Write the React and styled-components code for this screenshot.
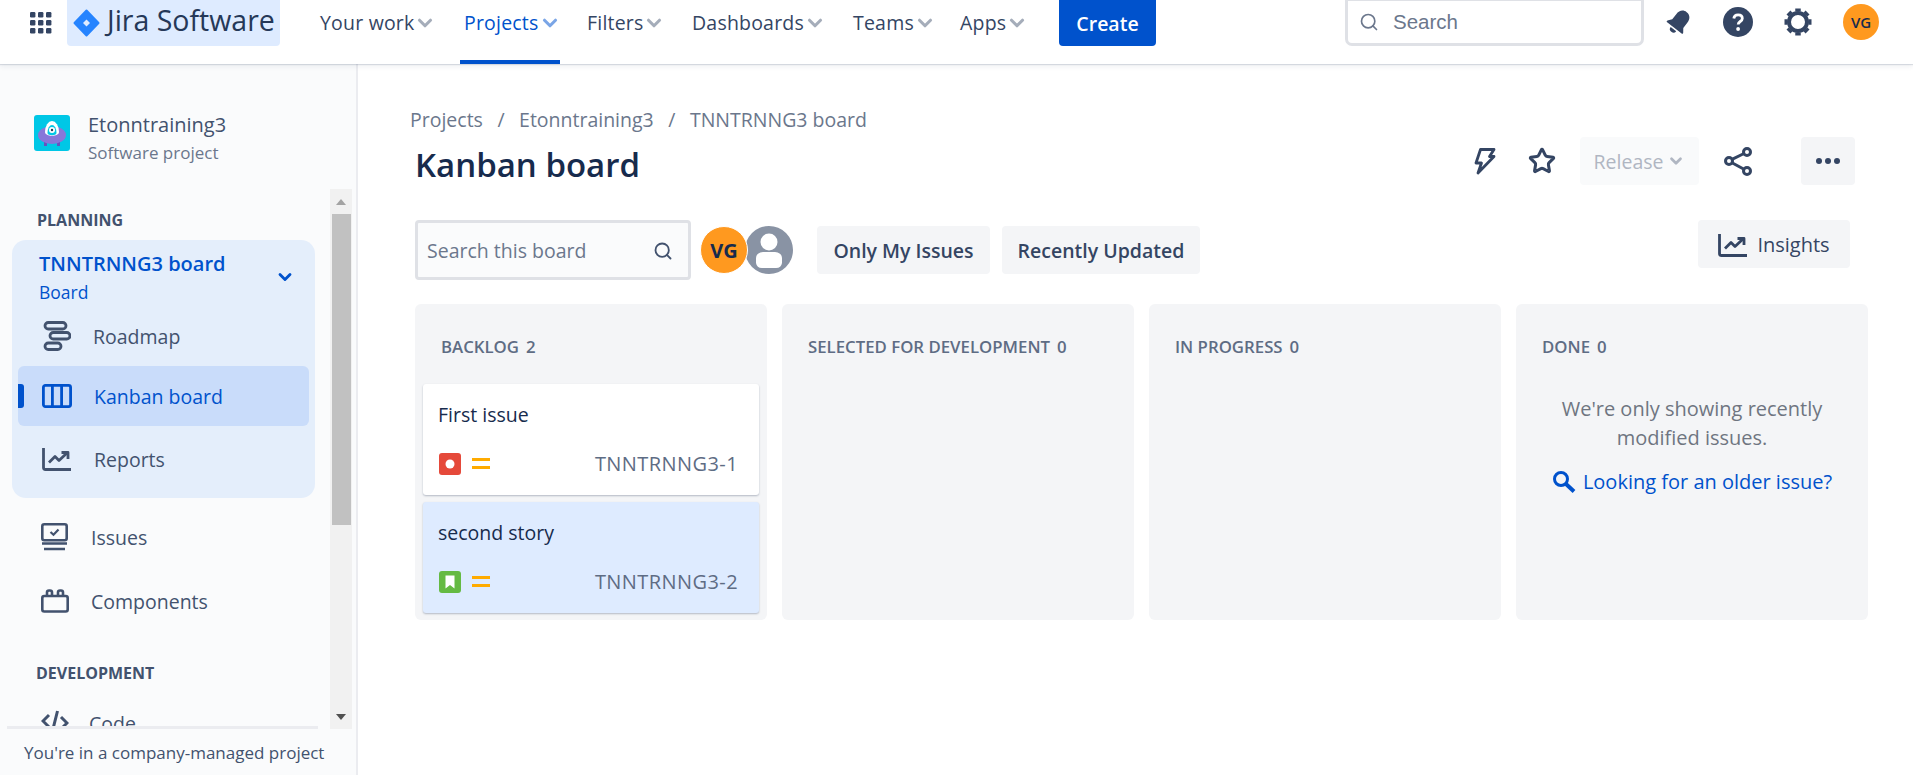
import React from "react";
import styled, { createGlobalStyle } from "styled-components";
import { ChevronDown, Search as SearchIcon, Star } from "lucide-react";

const GlobalStyle = createGlobalStyle`
  html, body {
    margin: 0;
    padding: 0;
    height: 100%;
    overflow: hidden;
    background: #fff;
    font-family: "Open Sans", "Noto Sans", "Liberation Sans", sans-serif;
    color: #172b4d;
  }
  * { box-sizing: border-box; }
`;

const Page = styled.div`
  width: 1913px;
  height: 775px;
  display: flex;
  flex-direction: column;
  overflow: hidden;
`;

/* top bar */
const TopBar = styled.header`
  height: 64px;
  flex: none;
  display: flex;
  align-items: flex-start;
  background: #fff;
  box-shadow: 0 1px 1px rgba(9, 30, 66, 0.13), 0 3px 5px rgba(9, 30, 66, 0.06);
  position: relative;
  z-index: 2;
`;

const GridButton = styled.div`
  margin: 10px 15px 0 28px;
  width: 24px;
  height: 24px;
  color: #344563;
`;

const LogoBox = styled.div`
  width: 213px;
  height: 46px;
  display: flex;
  align-items: center;
  gap: 7px;
  padding-left: 6px;
  background: #deebff;
  border-radius: 0 0 4px 4px;
`;

const LogoText = styled.span`
  font-size: 28.5px;
  line-height: 36px;
  margin-top: -6px;
  color: #253858;
  white-space: nowrap;
`;

const NavList = styled.nav`
  display: flex;
  margin-left: 36px;
  height: 64px;
`;

const NavItem = styled.div`
  width: ${(p) => p.$w}px;
  margin-right: ${(p) => p.$after || 0}px;
  height: 64px;
  display: flex;
  align-items: flex-start;
  padding: 10px 0 0 4px;
  font-size: 19.5px;
  letter-spacing: 0.2px;
  line-height: 26px;
  white-space: nowrap;
  color: ${(p) => (p.$active ? "#0052cc" : "#344563")};
  border-bottom: 4px solid ${(p) => (p.$active ? "#0052cc" : "transparent")};
  svg {
    flex: none;
    margin: 2px 0 0 0;
    color: ${(p) => (p.$active ? "#7aa5e6" : "#a5adba")};
  }
`;

const CreateButton = styled.button`
  width: 97px;
  height: 46px;
  margin-left: 2px;
  border: none;
  border-radius: 0 0 4px 4px;
  background: #0052cc;
  color: #fff;
  font: 600 19.5px "Open Sans", sans-serif;
`;

const TopRight = styled.div`
  margin-left: auto;
  display: flex;
  align-items: flex-start;
  padding-right: 34px;
`;

const TopSearch = styled.div`
  width: 299px;
  height: 46px;
  display: flex;
  align-items: center;
  gap: 14px;
  padding-left: 11px;
  border: 3px solid #dfe1e6;
  border-top-width: 1px;
  border-radius: 0 0 7px 7px;
  font: 20.5px "Liberation Sans", sans-serif;
  color: #6b778c;
  margin-right: 21px;
`;

const TopIcon = styled.div`
  width: ${(p) => p.$w}px;
  height: 30px;
  margin: 7px ${(p) => p.$gap}px 0 0;
  color: #344563;
  svg { display: block; }
`;

const SmallAvatar = styled.div`
  width: 36px;
  height: 36px;
  margin-top: 4px;
  border-radius: 50%;
  background: #ff991f;
  display: flex;
  align-items: center;
  justify-content: center;
  font-size: 15px;
  font-weight: 600;
  color: #172b4d;
`;

/* below the bar */
const Body = styled.div`
  flex: 1;
  min-height: 0;
  display: flex;
`;

const Sidebar = styled.aside`
  width: 358px;
  flex: none;
  display: flex;
  flex-direction: column;
  background: #fafbfc;
  border-right: 2px solid #ebecf0;
`;

const ProjectHead = styled.div`
  height: 125px;
  flex: none;
  display: flex;
  align-items: center;
  gap: 18px;
  padding: 12px 0 0 34px;
`;

const ProjectText = styled.div`
  display: flex;
  flex-direction: column;
  gap: 6px;
  margin-top: 11px;
`;

const ProjectName = styled.div`
  font-size: 20px;
  font-weight: 500;
  line-height: 24px;
  color: #42526e;
`;

const ProjectType = styled.div`
  font-size: 17px;
  line-height: 20px;
  color: #6b778c;
`;

const ScrollArea = styled.div`
  flex: 1;
  min-height: 0;
  display: flex;
`;

const SideContent = styled.div`
  flex: 1;
  min-width: 0;
  overflow: hidden;
`;

const SectionLabel = styled.div`
  font-size: 16px;
  font-weight: 700;
  line-height: 20px;
  color: #42526e;
  padding-left: ${(p) => p.$left}px;
  margin-top: ${(p) => p.$top}px;
`;

const BoardGroup = styled.div`
  width: 303px;
  height: 258px;
  margin: 10px 0 0 12px;
  padding: 4px 6px 0;
  background: #e4eefb;
  border-radius: 14px;
`;

const BoardHead = styled.div`
  height: 64px;
  display: flex;
  align-items: center;
  justify-content: space-between;
  padding: 0 14px 0 21px;
  color: #0052cc;
  svg { margin-top: 2px; }
`;

const BoardTitle = styled.div`
  font-size: 20px;
  font-weight: 600;
  line-height: 28px;
`;

const BoardSub = styled.div`
  font-size: 17.5px;
  line-height: 22px;
  margin-top: 3px;
`;

const SideRow = styled.div`
  position: relative;
  height: ${(p) => p.$h}px;
  display: flex;
  align-items: center;
  gap: ${(p) => p.$gap || 22}px;
  padding-left: ${(p) => p.$pad}px;
  margin-top: ${(p) => p.$top || 0}px;
  border-radius: 6px;
  font-size: 19.5px;
  color: ${(p) => (p.$active ? "#0052cc" : "#42526e")};
  background: ${(p) => (p.$active ? "#c9dcfa" : "transparent")};
  svg { flex: none; }
`;

const ActiveMark = styled.span`
  position: absolute;
  left: 0;
  top: 18px;
  width: 6px;
  height: 24px;
  background: #0052cc;
  border-radius: 0 3px 3px 0;
`;

const ScrollBar = styled.div`
  width: 22px;
  margin-right: 4px;
  flex: none;
  display: flex;
  flex-direction: column;
  background: #f1f1f1;
`;

const ScrollButton = styled.div`
  height: 25px;
  flex: none;
  display: flex;
  align-items: center;
  justify-content: center;
  &::before {
    content: "";
    border-left: 5px solid transparent;
    border-right: 5px solid transparent;
    ${(p) => (p.$up ? "border-bottom: 6px solid #a3a3a3;" : "border-top: 6px solid #505050;")}
  }
`;

const ScrollThumb = styled.div`
  height: 311px;
  background: #c1c1c1;
  margin: 0 1px 0 2px;
`;

const ScrollRest = styled.div`
  flex: 1;
`;

const SideFoot = styled.div`
  position: relative;
  height: 49px;
  flex: none;
  margin: -3px 0 0 7px;
  padding: 1px 0 0 17px;
  width: 311px;
  border-top: 3px solid #ebecf0;
  background: #fafbfc;
  display: flex;
  align-items: center;
  font-size: 17px;
  white-space: nowrap;
  color: #42526e;
`;

/* main */
const Main = styled.main`
  flex: 1;
  min-width: 0;
  padding: 41px 45px 0 57px;
`;

const Crumbs = styled.div`
  display: flex;
  gap: 14.5px;
  height: 28px;
  align-items: center;
  font-size: 19.5px;
  color: #6b778c;
  margin-left: -5px;
`;

const TitleRow = styled.div`
  display: flex;
  align-items: flex-start;
  justify-content: space-between;
  height: 84px;
  margin-top: 3px;
`;

const PageTitle = styled.h1`
  margin: 7px 0 0;
  font-size: 33px;
  font-weight: 600;
  line-height: 44px;
  color: #172b4d;
`;

const Actions = styled.div`
  display: flex;
  align-items: center;
  height: 48px;
  margin: 1px 13px 0 0;
  color: #344563;
`;

const ActionIcon = styled.div`
  display: flex;
  align-items: center;
  margin-left: ${(p) => p.$left}px;
`;

const GhostButton = styled.div`
  width: ${(p) => p.$w}px;
  height: 48px;
  margin-left: ${(p) => p.$left}px;
  display: flex;
  align-items: center;
  justify-content: center;
  gap: 4px;
  border-radius: 4px;
  background: ${(p) => (p.$muted ? "#f9fafb" : "#f4f5f7")};
  color: ${(p) => (p.$muted ? "#b0b6c2" : "#344563")};
  font-size: 19.5px;
`;

const FilterRow = styled.div`
  display: flex;
  align-items: center;
  height: 60px;
`;

const BoardSearch = styled.div`
  width: 276px;
  height: 60px;
  display: flex;
  align-items: center;
  justify-content: space-between;
  padding: 1px 15px 0 9px;
  border: 3px solid #dfe1e6;
  border-radius: 4px;
  background: #fafbfc;
  font-size: 19.5px;
  color: #6b778c;
  svg { color: #42526e; }
`;

const FilterAvatar = styled.div`
  width: 48px;
  height: 48px;
  margin-left: 9px;
  position: relative;
  z-index: 1;
  border-radius: 50%;
  border: 1px solid #fff;
  background: #ff991f;
  display: flex;
  align-items: center;
  justify-content: center;
  font-size: 20px;
  font-weight: 700;
  color: #172b4d;
`;

const GreyAvatar = styled.div`
  width: 48px;
  height: 48px;
  margin-left: -3px;
  svg { display: block; }
`;

const FilterButton = styled.div`
  height: 48px;
  width: ${(p) => p.$w}px;
  margin-left: ${(p) => p.$left}px;
  padding-top: 1px;
  display: flex;
  align-items: center;
  justify-content: center;
  background: #f4f5f7;
  border-radius: 4px;
  font-size: 19.5px;
  font-weight: 600;
  white-space: nowrap;
  color: #344563;
`;

const InsightsButton = styled(FilterButton)`
  align-self: flex-start;
  margin-left: auto;
  margin-right: 18px;
  font-size: 20px;
  font-weight: 500;
  gap: 9px;
`;

const Columns = styled.div`
  display: flex;
  gap: 15px;
  margin-top: 24px;
`;

const Column = styled.section`
  width: 352px;
  height: 316px;
  padding: 0 8px;
  background: #f4f5f7;
  border-radius: 6px;
`;

const ColumnHead = styled.div`
  height: 80px;
  display: flex;
  align-items: center;
  gap: 7px;
  padding: 4px 0 0 18px;
  font-size: 16.8px;
  font-weight: 600;
  white-space: nowrap;
  color: #5e6c84;
`;

const Card = styled.article`
  height: 111px;
  margin-bottom: 7px;
  padding: 17px 15px 0;
  border-radius: 3px;
  background: ${(p) => (p.$selected ? "#deebff" : "#fff")};
  box-shadow: 0 1px 2px rgba(9, 30, 66, 0.28);
`;

const CardTitle = styled.div`
  font-size: 19.5px;
  line-height: 28px;
  color: #172b4d;
`;

const CardFoot = styled.div`
  display: flex;
  align-items: center;
  margin-top: 21px;
  padding-left: 1px;
  gap: 11px;
`;

const CardKey = styled.span`
  margin-left: auto;
  padding-right: 6px;
  font-size: 20px;
  letter-spacing: 0.42px;
  color: #5e6c84;
`;

const Priority = styled.span`
  width: 18px;
  height: 11px;
  border-top: 3px solid #ffab00;
  border-bottom: 3px solid #ffab00;
`;

const DoneNote = styled.div`
  text-align: center;
  font-size: 20px;
  line-height: 29px;
  color: #6f7581;
  margin-top: 10px;
`;

const OlderLink = styled.div`
  display: flex;
  justify-content: center;
  align-items: center;
  gap: 7px;
  margin-top: 16px;
  font-size: 20px;
  white-space: nowrap;
  color: #0052cc;
`;

/* drawings */
function GridIcon() {
  const spots = [2, 10, 18];
  return (
    <svg width="24" height="24" viewBox="0 0 24 24" fill="currentColor">
      {spots.map((y) =>
        spots.map((x) => <rect key={x + "-" + y} x={x} y={y} width="5.4" height="5.4" rx="1.2" />)
      )}
    </svg>
  );
}

function JiraMark() {
  return (
    <svg width="27" height="28" viewBox="0 0 27 28">
      <path d="M13.5 1.5 25.5 14 13.5 26.5 1.5 14Z" fill="#2684ff" stroke="#2684ff" strokeWidth="2" strokeLinejoin="round" />
      <path d="M13.5 10.5 17 14 13.5 17.5 10 14Z" fill="#deebff" />
    </svg>
  );
}

function ProjectAvatar() {
  return (
    <svg width="36" height="36" viewBox="0 0 36 36">
      <rect width="36" height="36" rx="3" fill="#00c7e6" />
      <rect x="10" y="25" width="3" height="6" fill="#6554c0" />
      <rect x="23" y="25" width="3" height="6" fill="#6554c0" />
      <ellipse cx="18" cy="20" rx="14" ry="9" fill="#8777d9" />
      <path d="M11 17a7 11 0 0 1 14 0c0 5-14 5-14 0Z" fill="#fff" />
      <path d="M13.5 18a4.5 8 0 0 1 9 0c0 3-9 3-9 0Z" fill="#00c7e6" />
      <circle cx="18" cy="15" r="3" fill="#fff" />
      <circle cx="18" cy="15" r="1.2" fill="#253858" />
    </svg>
  );
}

function BellIcon() {
  return (
    <svg width="28" height="30" viewBox="0 0 28 30" fill="currentColor">
      <g transform="rotate(38 14 15)">
        <path d="M14 2.5c-4.6 0-7 3.4-7 8v6.500L4 21v1.500h20V21l-3-4v-6.500c0-4.600-2.400-8-7-8Z" />
        <path d="M10.500 24h7a3.500 3.500 0 0 1-7 0Z" />
      </g>
    </svg>
  );
}

function HelpIcon() {
  return (
    <svg width="30" height="30" viewBox="0 0 30 30">
      <circle cx="15" cy="15" r="15" fill="currentColor" />
      <path d="M10.800 11.500c.3-2.400 2-3.600 4.300-3.600 2.500 0 4.200 1.400 4.200 3.500 0 3.200-4.100 3-4.100 6" fill="none" stroke="#fff" strokeWidth="2.800" />
      <circle cx="15.100" cy="22" r="1.900" fill="#fff" />
    </svg>
  );
}

function GearIcon() {
  const angles = [0, 45, 90, 135, 180, 225, 270, 315];
  return (
    <svg width="28" height="30" viewBox="0 0 28 30" fill="none" stroke="currentColor">
      <circle cx="14" cy="15" r="9" strokeWidth="4" />
      {angles.map((a) => (
        <path key={a} d="M14 4.500V1.500" strokeWidth="5.500" transform={`rotate(${a} 14 15)`} />
      ))}
    </svg>
  );
}

function BoltIcon() {
  return (
    <svg width="22" height="28" viewBox="0 0 22 28" fill="none" stroke="currentColor" strokeWidth="2.800" strokeLinejoin="round">
      <path d="M6.500 2.500H20L15.500 9.500H20L4 26 7.500 16H2Z" />
    </svg>
  );
}

function ShareIcon() {
  return (
    <svg width="28" height="30" viewBox="0 0 28 30" fill="none" stroke="currentColor" strokeWidth="3">
      <circle cx="23" cy="6" r="3.500" />
      <circle cx="5" cy="15" r="3.500" />
      <circle cx="23" cy="25" r="3.500" />
      <path d="M8 13.300 20 7.500M8 16.700 20 23.300" />
    </svg>
  );
}

function TrendIcon() {
  return (
    <svg width="30" height="24" viewBox="0 0 30 24" fill="none" stroke="currentColor" strokeWidth="2.800" strokeLinejoin="round">
      <path d="M1.500 1v19.500a2 2 0 0 0 2 2H29" />
      <path d="M7 15.500 13 9.500 17 13.500 25 6" />
      <path d="M19.500 5.500H26V12" />
    </svg>
  );
}

function RoadmapIcon() {
  return (
    <svg width="28" height="30" viewBox="0 0 28 30" fill="none" stroke="currentColor" strokeWidth="2.800">
      <rect x="2" y="1.500" width="21" height="6.500" rx="3.250" />
      <rect x="7" y="11.500" width="20" height="6.500" rx="3.250" />
      <rect x="2" y="22" width="16" height="6.500" rx="3.250" />
    </svg>
  );
}

function KanbanIcon() {
  return (
    <svg width="30" height="24" viewBox="0 0 30 24" fill="none" stroke="currentColor" strokeWidth="2.800">
      <rect x="1.400" y="1.400" width="27.200" height="21.200" rx="2" />
      <path d="M10.400 1.400v21.200M19.600 1.400v21.200" />
    </svg>
  );
}

function IssuesIcon() {
  return (
    <svg width="27" height="28" viewBox="0 0 27 28" fill="none" stroke="currentColor" strokeWidth="2.600">
      <rect x="1.300" y="1.300" width="24.400" height="16" rx="2" />
      <path d="M9.500 9 12.500 11.800 17.500 6.500" strokeWidth="2.200" />
      <path d="M1 20.500h25M3 26h21" strokeWidth="2.400" />
    </svg>
  );
}

function ComponentsIcon() {
  return (
    <svg width="28" height="24" viewBox="0 0 28 24" fill="none" stroke="currentColor" strokeWidth="2.600" strokeLinejoin="round">
      <rect x="1.300" y="7" width="25.400" height="15.500" rx="2" />
      <path d="M6 7V3.500a2 2 0 0 1 2-2h1a2 2 0 0 1 2 2V7M17 7V3.500a2 2 0 0 1 2-2h1a2 2 0 0 1 2 2V7" />
    </svg>
  );
}

function CodeIcon() {
  return (
    <svg width="28" height="26" viewBox="0 0 28 26" fill="none" stroke="currentColor" strokeWidth="3">
      <path d="M8 5 2 11l6 6M20 7l6 6-6 6M16.500 1 11.500 21" />
    </svg>
  );
}

function BugIcon() {
  return (
    <svg width="22" height="22" viewBox="0 0 22 22">
      <rect width="22" height="22" rx="3" fill="#e5493a" />
      <circle cx="11" cy="11" r="4.500" fill="#fff" />
    </svg>
  );
}

function StoryIcon() {
  return (
    <svg width="22" height="22" viewBox="0 0 22 22">
      <rect width="22" height="22" rx="3" fill="#65ba43" />
      <path d="M6.500 4.500h9v13L11 14l-4.500 3.500Z" fill="#fff" />
    </svg>
  );
}

function PersonAvatar() {
  return (
    <svg width="48" height="48" viewBox="0 0 48 48">
      <circle cx="24" cy="24" r="24" fill="#8993a4" />
      <circle cx="24" cy="16" r="8.500" fill="#fff" />
      <path d="M11 32a7 6 0 0 1 7-6h12a7 6 0 0 1 7 6v5a6 6 0 0 1-6 5H17a6 6 0 0 1-6-5Z" fill="#fff" />
    </svg>
  );
}

function OlderSearchIcon() {
  return (
    <svg width="24" height="24" viewBox="0 0 24 24" fill="none" stroke="currentColor">
      <circle cx="9" cy="9" r="6.500" strokeWidth="3" />
      <path d="M14 14 22 21.500" strokeWidth="4" />
    </svg>
  );
}

const navItems = [
  { label: "Your work", w: 144 },
  { label: "Projects", w: 100, after: 23, active: true },
  { label: "Filters", w: 105 },
  { label: "Dashboards", w: 161 },
  { label: "Teams", w: 107 },
  { label: "Apps", w: 101 },
];

const columns = [
  { name: "SELECTED FOR DEVELOPMENT", count: 0 },
  { name: "IN PROGRESS", count: 0 },
];

export default function App() {
  return (
    <Page>
      <GlobalStyle />
      <TopBar>
        <GridButton>
          <GridIcon />
        </GridButton>
        <LogoBox>
          <JiraMark />
          <LogoText>Jira Software</LogoText>
        </LogoBox>
        <NavList>
          {navItems.map((item) => (
            <NavItem key={item.label} $w={item.w} $after={item.after} $active={item.active}>
              {item.label}
              <ChevronDown size={22} strokeWidth={3.4} />
            </NavItem>
          ))}
          <CreateButton>Create</CreateButton>
        </NavList>
        <TopRight>
          <TopSearch>
            <SearchIcon size={20} strokeWidth={2} />
            Search
          </TopSearch>
          <TopIcon $w={28} $gap={30}>
            <BellIcon />
          </TopIcon>
          <TopIcon $w={30} $gap={31}>
            <HelpIcon />
          </TopIcon>
          <TopIcon $w={28} $gap={31}>
            <GearIcon />
          </TopIcon>
          <SmallAvatar>VG</SmallAvatar>
        </TopRight>
      </TopBar>

      <Body>
        <Sidebar>
          <ProjectHead>
            <ProjectAvatar />
            <ProjectText>
              <ProjectName>Etonntraining3</ProjectName>
              <ProjectType>Software project</ProjectType>
            </ProjectText>
          </ProjectHead>
          <ScrollArea>
            <SideContent>
              <SectionLabel $left={37} $top={21}>PLANNING</SectionLabel>
              <BoardGroup>
                <BoardHead>
                  <div>
                    <BoardTitle>TNNTRNNG3 board</BoardTitle>
                    <BoardSub>Board</BoardSub>
                  </div>
                  <ChevronDown size={20} strokeWidth={3.4} />
                </BoardHead>
                <SideRow $h={56} $pad={25}>
                  <RoadmapIcon />
                  Roadmap
                </SideRow>
                <SideRow $h={60} $pad={24} $top={2} $active>
                  <ActiveMark />
                  <KanbanIcon />
                  Kanban board
                </SideRow>
                <SideRow $h={66} $pad={24}>
                  <TrendIcon />
                  Reports
                </SideRow>
              </BoardGroup>
              <SideRow $h={52} $pad={41} $top={13} $gap={23}>
                <IssuesIcon />
                Issues
              </SideRow>
              <SideRow $h={52} $pad={41} $top={12} $gap={22}>
                <ComponentsIcon />
                Components
              </SideRow>
              <SectionLabel $left={36} $top={36}>DEVELOPMENT</SectionLabel>
              <SideRow $h={52} $pad={41} $top={14} $gap={20}>
                <CodeIcon />
                Code
              </SideRow>
            </SideContent>
            <ScrollBar>
              <ScrollButton $up />
              <ScrollThumb />
              <ScrollRest />
              <ScrollButton />
            </ScrollBar>
          </ScrollArea>
          <SideFoot>You're in a company-managed project</SideFoot>
        </Sidebar>

        <Main>
          <Crumbs>
            <span>Projects</span>
            <span>/</span>
            <span>Etonntraining3</span>
            <span>/</span>
            <span>TNNTRNNG3 board</span>
          </Crumbs>
          <TitleRow>
            <PageTitle>Kanban board</PageTitle>
            <Actions>
              <ActionIcon $left={0}>
                <BoltIcon />
              </ActionIcon>
              <ActionIcon $left={32}>
                <Star size={28} strokeWidth={2.6} />
              </ActionIcon>
              <GhostButton $w={119} $left={24} $muted>
                Release
                <ChevronDown size={18} strokeWidth={3.6} />
              </GhostButton>
              <ActionIcon $left={25}>
                <ShareIcon />
              </ActionIcon>
              <GhostButton $w={54} $left={49}>
                <svg width="24" height="6" viewBox="0 0 24 6" fill="currentColor">
                  <circle cx="3" cy="3" r="3" />
                  <circle cx="12" cy="3" r="3" />
                  <circle cx="21" cy="3" r="3" />
                </svg>
              </GhostButton>
            </Actions>
          </TitleRow>
          <FilterRow>
            <BoardSearch>
              Search this board
              <SearchIcon size={20} strokeWidth={2.2} />
            </BoardSearch>
            <FilterAvatar>VG</FilterAvatar>
            <GreyAvatar>
              <PersonAvatar />
            </GreyAvatar>
            <FilterButton $w={173} $left={24}>Only My Issues</FilterButton>
            <FilterButton $w={198} $left={12}>Recently Updated</FilterButton>
            <InsightsButton $w={152}>
              <TrendIcon />
              Insights
            </InsightsButton>
          </FilterRow>
          <Columns>
            <Column>
              <ColumnHead>
                <span>BACKLOG</span>
                <span>2</span>
              </ColumnHead>
              <Card>
                <CardTitle>First issue</CardTitle>
                <CardFoot>
                  <BugIcon />
                  <Priority />
                  <CardKey>TNNTRNNG3-1</CardKey>
                </CardFoot>
              </Card>
              <Card $selected>
                <CardTitle>second story</CardTitle>
                <CardFoot>
                  <StoryIcon />
                  <Priority />
                  <CardKey>TNNTRNNG3-2</CardKey>
                </CardFoot>
              </Card>
            </Column>
            {columns.map((col) => (
              <Column key={col.name}>
                <ColumnHead>
                  <span>{col.name}</span>
                  <span>{col.count}</span>
                </ColumnHead>
              </Column>
            ))}
            <Column>
              <ColumnHead>
                <span>DONE</span>
                <span>0</span>
              </ColumnHead>
              <DoneNote>
                We're only showing recently
                <br />
                modified issues.
              </DoneNote>
              <OlderLink>
                <OlderSearchIcon />
                Looking for an older issue?
              </OlderLink>
            </Column>
          </Columns>
        </Main>
      </Body>
    </Page>
  );
}
